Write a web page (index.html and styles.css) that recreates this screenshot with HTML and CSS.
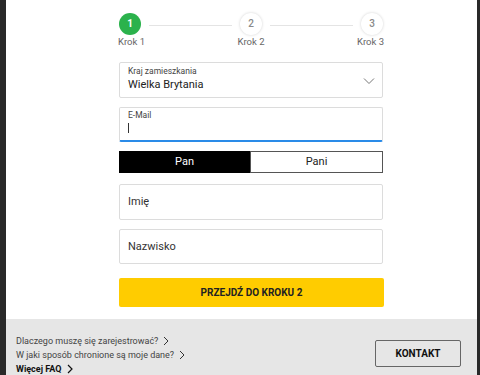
FILE: index.html
```html
<!DOCTYPE html>
<html lang="pl">
<head>
	<meta charset="utf-8" />
	<title>Rejestracja</title>
	<link rel="stylesheet" href="styles.css">
</head>
<body>
	<div class="panel">
		<div class="main">
			<div class="stepper">
				<div class="step step-first active">
					<span class="dot">1</span>
					<span class="step-name">Krok 1</span>
				</div>
				<div class="bar"></div>
				<div class="step">
					<span class="dot">2</span>
					<span class="step-name">Krok 2</span>
				</div>
				<div class="bar"></div>
				<div class="step step-last">
					<span class="dot">3</span>
					<span class="step-name">Krok 3</span>
				</div>
			</div>

			<div class="form">
				<div class="field field-select">
					<div class="field-label">Kraj zamieszkania</div>
					<div class="field-value">Wielka Brytania</div>
					<svg class="chevron" width="12" height="8" viewBox="0 0 12 8"><path d="M1 1.5l5 5 5-5" fill="none" stroke="#777" stroke-width="1"/></svg>
				</div>
				<div class="field field-focus">
					<div class="field-label">E-Mail</div>
					<div class="caret"></div>
				</div>
				<div class="gender">
					<span class="gender-on">Pan</span>
					<span class="gender-off">Pani</span>
				</div>
				<div class="field field-plain">Imię</div>
				<div class="field field-plain field-last">Nazwisko</div>
				<a class="btn-next" href="#">PRZEJDŹ DO KROKU 2</a>
			</div>
		</div>

		<div class="footer">
			<ul class="faq">
				<li><a href="#">Dlaczego muszę się zarejestrować?</a><svg class="arrow" width="6" height="10" viewBox="0 0 6 10"><path d="M1 1l4 4-4 4" fill="none" stroke="#333" stroke-width="1"/></svg></li>
				<li><a href="#">W jaki sposób chronione są moje dane?</a><svg class="arrow" width="6" height="10" viewBox="0 0 6 10"><path d="M1 1l4 4-4 4" fill="none" stroke="#333" stroke-width="1"/></svg></li>
				<li class="more"><a href="#">Więcej FAQ</a><svg class="arrow" width="6" height="10" viewBox="0 0 6 10"><path d="M1 1l4 4-4 4" fill="none" stroke="#111" stroke-width="1.2"/></svg></li>
			</ul>
			<a class="btn-contact" href="#">KONTAKT</a>
		</div>
	</div>
</body>
</html>
```

FILE: styles.css
```css
html, body {
	margin: 0;
	padding: 0;
	height: 100%;
}
body {
	background-color: #292929;
	font-family: Roboto, "Liberation Sans", Arial, sans-serif;
	color: #222;
	display: flex;
}
a {
	text-decoration: none;
	color: inherit;
}
.panel {
	width: 471px;
	margin-left: 6px;
	background-color: #fff;
	display: flex;
	flex-direction: column;
	height: 375px;
}
.main {
	flex: 1;
	padding: 13px 0 0 112px;
}

/* kroki */
.stepper {
	width: 266px;
	display: flex;
	align-items: flex-start;
	height: 49px;
}
.step {
	display: flex;
	flex-direction: column;
	align-items: center;
	width: 24px;
}
.step-first {
	align-items: flex-start;
}
.step-last {
	align-items: flex-end;
}
.dot {
	width: 22px;
	height: 22px;
	border-radius: 50%;
	background: #fff;
	box-shadow: 0 0 3px rgba(0,0,0,0.18);
	color: #8a8a8a;
	font-size: 10px;
	font-weight: 500;
	line-height: 22px;
	text-align: center;
	margin: 0 1px;
}
.active .dot {
	background: #2bb24c;
	color: #fff;
	font-weight: 700;
	box-shadow: none;
}
.step-name {
	font-size: 9.5px;
	line-height: 10px;
	color: #666;
	margin-top: 2px;
	white-space: nowrap;
}
.bar {
	flex: 1;
	height: 1px;
	background: #e4e4e4;
	margin: 12px 7px 0;
}

/* formularz */
.form {
	width: 264px;
	margin-left: 1px;
	display: flex;
	flex-direction: column;
}
.field {
	box-sizing: border-box;
	border: 1px solid #dcdcdc;
	border-radius: 2px;
	padding: 0 8px;
	margin-bottom: 9px;
	position: relative;
}
.field-label {
	font-size: 8.5px;
	line-height: 10px;
	color: #444;
}
.field-value {
	font-size: 11px;
	line-height: 14px;
	color: #222;
	margin-top: 2px;
}
.field-select {
	height: 36px;
	padding-top: 3px;
}
.chevron {
	position: absolute;
	right: 7px;
	top: 14px;
}
.field-focus {
	height: 35px;
	padding-top: 2px;
	border-bottom: 2px solid #2a8be8;
}
.caret {
	width: 1px;
	height: 10px;
	background: #333;
	margin-top: 3px;
}
.gender {
	display: flex;
	height: 22px;
	margin-bottom: 11px;
	font-size: 11px;
	line-height: 22px;
	text-align: center;
}
.gender span {
	flex: 1;
	box-sizing: border-box;
}
.gender-on {
	background: #000;
	color: #fff;
}
.gender-off {
	border: 1px solid #555;
	line-height: 20px;
	color: #222;
}
.field-plain {
	height: 36px;
	line-height: 34px;
	font-size: 11px;
	color: #333;
}
.field-last {
	height: 35px;
	line-height: 33px;
	margin-bottom: 14px;
}
.btn-next {
	display: block;
	height: 29px;
	line-height: 29px;
	background: #ffcc00;
	border-radius: 2px;
	text-align: center;
	font-size: 10px;
	font-weight: 700;
	color: #222;
	width: 265px;
}

/* stopka */
.footer {
	height: 56px;
	background: #e6e6e6;
	display: flex;
	justify-content: space-between;
	align-items: flex-start;
	padding: 0 16px 0 10px;
}
.faq {
	list-style: none;
	margin: 0;
	padding: 15px 0 0;
}
.faq li {
	font-size: 9px;
	line-height: 14px;
	color: #444;
	display: flex;
	align-items: center;
}
.faq li.more {
	font-weight: 700;
	color: #111;
}
.arrow {
	margin-left: 5px;
}
.btn-contact {
	margin-top: 21px;
	width: 86px;
	height: 27px;
	box-sizing: border-box;
	border: 1px solid #666;
	border-radius: 2px;
	text-align: center;
	line-height: 25px;
	font-size: 10px;
	font-weight: 700;
	color: #111;
}
```
